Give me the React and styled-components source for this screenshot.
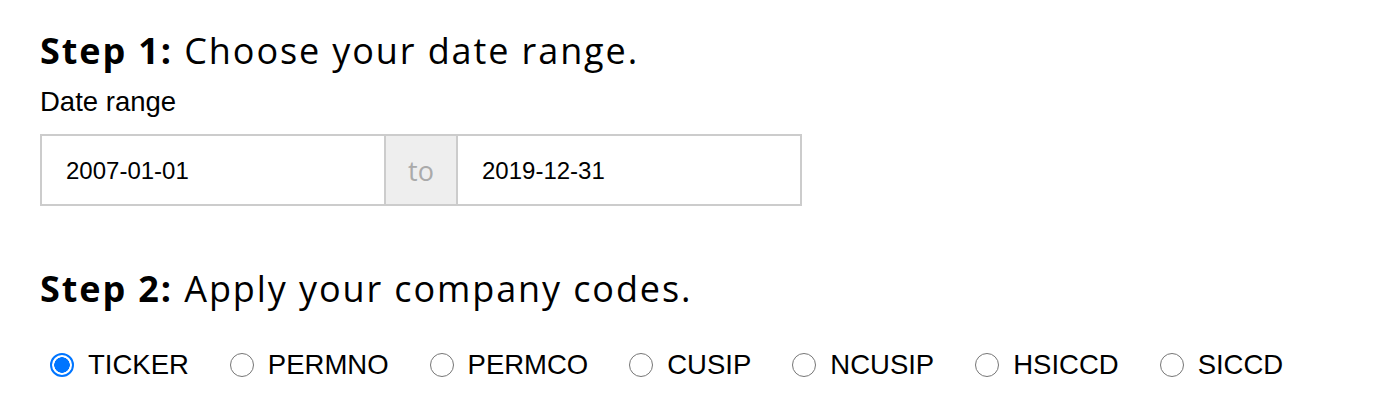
import React, { useState } from "react";
import styled, { createGlobalStyle } from "styled-components";

const Global = createGlobalStyle`
  html, body { margin: 0; padding: 0; background: #fff; }
  body { font-family: "Liberation Sans", Arial, sans-serif; color: #000; }
`;

const Page = styled.div`
  padding: 26px 40px 0 40px;
`;

const Section = styled.section`
  margin-bottom: ${(p) => p.$gap || 0}px;
`;

const Heading = styled.h2`
  margin: 0;
  font-family: "Open Sans", "Noto Sans CJK KR", sans-serif;
  font-weight: 400;
  font-size: 36px;
  letter-spacing: 1.9px;
  line-height: 50px;
  b { font-weight: 700; }
`;

const Label = styled.div`
  font-size: 27.5px;
  line-height: 32px;
  margin: 10px 0 16px 0;
`;

const InputGroup = styled.div`
  display: flex;
  width: 762px;
  height: 72px;
`;

const DateInput = styled.input`
  flex: 1;
  min-width: 0;
  box-sizing: border-box;
  height: 72px;
  border: 2px solid #ccc;
  padding: 2px 24px 0 24px;
  font-family: "Liberation Sans", Arial, sans-serif;
  font-size: 24px;
  color: #000;
  outline: none;
  background: #fff;
`;

const Addon = styled.span`
  box-sizing: border-box;
  width: 74px;
  height: 72px;
  padding-top: 1px;
  display: flex;
  align-items: center;
  justify-content: center;
  background: #eee;
  border: 2px solid #ccc;
  margin: 0 -2px;
  position: relative;
  z-index: 1;
  color: #aaa;
  font-family: "Open Sans", sans-serif;
  font-size: 27px;
`;

const RadioRow = styled.div`
  display: flex;
  align-items: center;
  gap: 41px;
  margin-top: 35px;
  padding-left: 10px;
`;

const RadioLabel = styled.label`
  display: flex;
  align-items: center;
  gap: 14px;
  font-size: 27.5px;
  line-height: 32px;
  cursor: pointer;
`;

const RadioInput = styled.input`
  appearance: none;
  margin: 0;
  width: 24px;
  height: 24px;
  box-sizing: border-box;
  border-radius: 50%;
  border: 1.5px solid #767676;
  background: #fff;
  &:checked {
    border: 2px solid #0075ff;
    background: radial-gradient(circle, #0075ff 0 7.5px, #fff 8px);
  }
`;

const codes = ["TICKER", "PERMNO", "PERMCO", "CUSIP", "NCUSIP", "HSICCD", "SICCD"];

export default function App() {
  const [code, setCode] = useState("TICKER");
  return (
    <Page>
      <Global />
      <Section $gap={58}>
        <Heading>
          <b>Step 1:</b> Choose your date range.
        </Heading>
        <Label>Date range</Label>
        <InputGroup>
          <DateInput defaultValue="2007-01-01" />
          <Addon>to</Addon>
          <DateInput defaultValue="2019-12-31" />
        </InputGroup>
      </Section>
      <Section>
        <Heading>
          <b>Step 2:</b> Apply your company codes.
        </Heading>
        <RadioRow>
          {codes.map((c) => (
            <RadioLabel key={c}>
              <RadioInput
                type="radio"
                name="code"
                checked={code === c}
                onChange={() => setCode(c)}
              />
              {c}
            </RadioLabel>
          ))}
        </RadioRow>
      </Section>
    </Page>
  );
}
